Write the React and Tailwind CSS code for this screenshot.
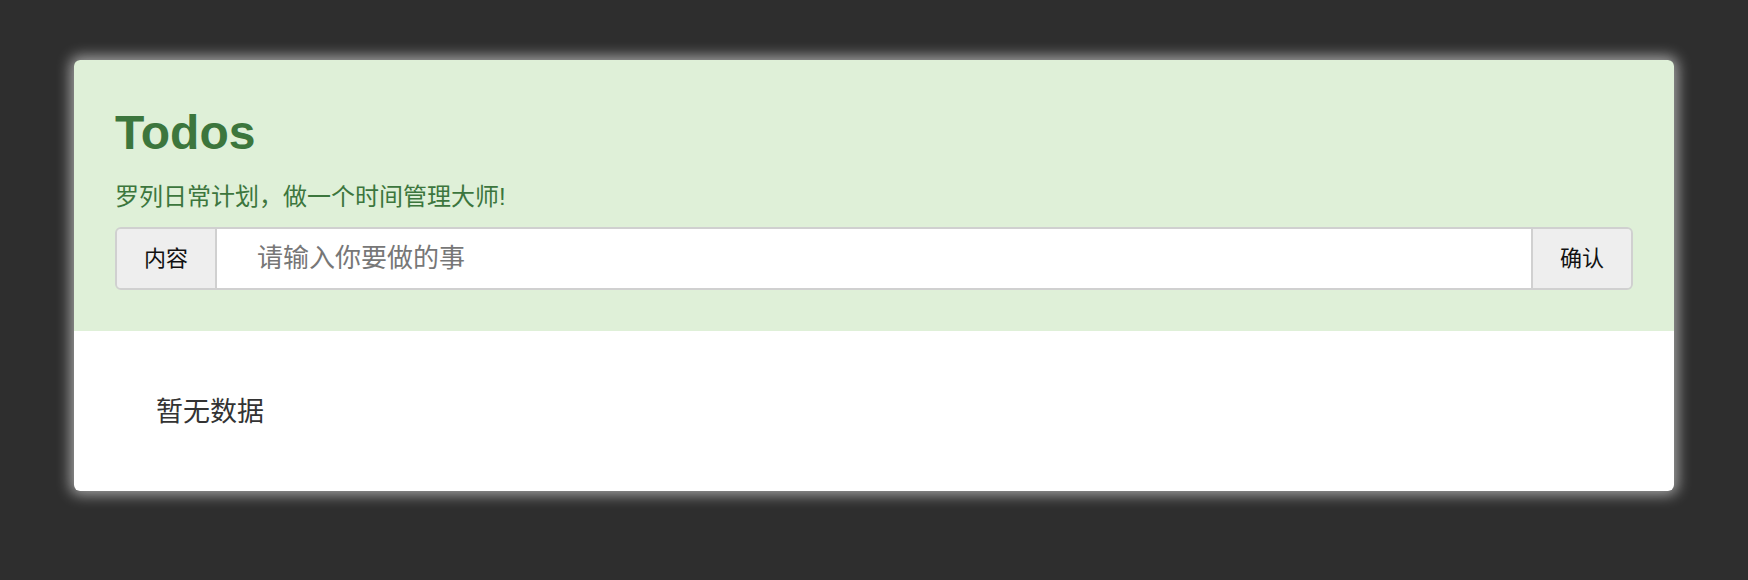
const cjk = { fontFamily: '"Liberation Sans", "Noto Sans CJK SC", sans-serif' };

export default function App() {
  return (
    <div className="min-h-[580px] bg-[#2e2e2e] pt-[60px]" style={cjk}>
      <div className="mx-auto w-[1600px] rounded-md overflow-hidden shadow-[0_0_14px_4px_rgba(255,255,255,0.55)]">
        {/* Header */}
        <div className="bg-[#dff0d8] px-[41px] pt-[49px] pb-[41px]">
          <h1 className="text-[48px] leading-none font-bold text-[#3c763d]">Todos</h1>
          <p className="mt-[28px] text-[24px] leading-none text-[#3c763d]">罗列日常计划，做一个时间管理大师!</p>

          {/* Input group */}
          <div className="mt-[18px] flex h-[63px] rounded-md border-2 border-[#d0d0d0] overflow-hidden">
            <span className="flex w-[100px] items-center justify-center border-r-2 border-[#d0d0d0] bg-[#eee] text-[22px] text-[#111]">
              内容
            </span>
            <input
              type="text"
              placeholder="请输入你要做的事"
              className="flex-1 bg-white pl-[40px] text-[26px] text-[#555] outline-none placeholder:text-[#777]"
            />
            <button className="w-[100px] border-l-2 border-[#d0d0d0] bg-[#eee] text-[22px] text-[#111]">确认</button>
          </div>
        </div>

        {/* List */}
        <div className="flex h-[160px] items-center bg-white pl-[82px]">
          <span className="mt-[2px] text-[27px] text-[#333]">暂无数据</span>
        </div>
      </div>
    </div>
  );
}
